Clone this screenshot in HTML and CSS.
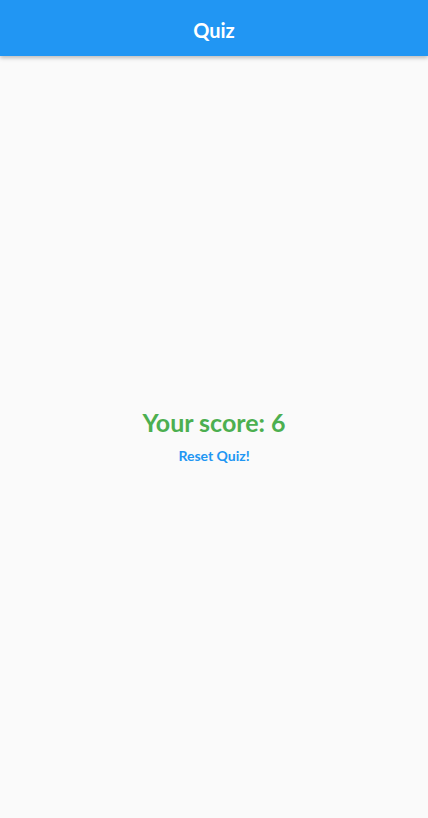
FILE: index.html
```html
<!DOCTYPE html>
<html>
<head>
<meta charset="utf-8">
<link rel="stylesheet" href="styles.css">
</head>
<body>
<header class="appbar"><h1 class="title">Quiz</h1></header>
<main class="content">
  <div class="result">
    <div class="score">Your score: 6</div>
    <button class="reset">Reset Quiz!</button>
  </div>
</main>
</body>
</html>
```

FILE: styles.css
```css
html, body {
  margin: 0;
  padding: 0;
  height: 100%;
  background: #fafafa;
  font-family: Lato, "Noto Sans", sans-serif;
}
body {
  display: flex;
  flex-direction: column;
}
.appbar {
  height: 56px;
  flex: 0 0 56px;
  box-sizing: border-box;
  padding-top: 4px;
  background: #2196f3;
  display: flex;
  align-items: center;
  justify-content: center;
  box-shadow: 0 2px 4px rgba(0,0,0,0.25);
  position: relative;
  z-index: 1;
}
.title {
  margin: 0;
  color: #fff;
  font-size: 20px;
  font-weight: 700;
}
.content {
  flex: 1;
  display: flex;
  align-items: center;
  justify-content: center;
  padding-top: 6px;
}
.result {
  display: flex;
  flex-direction: column;
  align-items: center;
}
.score {
  color: #4caf50;
  font-size: 25px;
  font-weight: 700;
  line-height: 30px;
}
.reset {
  height: 36px;
  padding: 0 16px;
  border: none;
  background: transparent;
  color: #2196f3;
  font-family: Lato, "Noto Sans", sans-serif;
  font-size: 14px;
  font-weight: 700;
}
```
